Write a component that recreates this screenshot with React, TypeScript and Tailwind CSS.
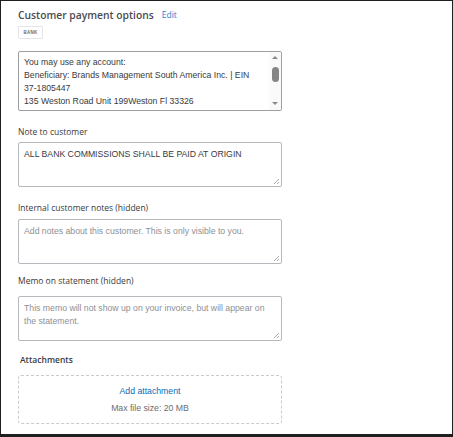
import React from "react";

const label = "text-[8.5px] leading-[11px] text-[#393a3d] font-['Open_Sans',sans-serif]";
const body = "font-['Liberation_Sans',Arial,sans-serif] text-[8.7px] leading-[13px]";

function ResizeGrip() {
  return (
    <svg
      className="absolute right-[1px] bottom-[1px]"
      width="7"
      height="7"
      viewBox="0 0 7 7"
    >
      <path d="M6 1 L1 6 M6 4 L4 6" stroke="#9a9a9a" strokeWidth="0.8" />
    </svg>
  );
}

function NoteBox({ text, placeholder }: { text: string; placeholder?: boolean }) {
  return (
    <div className="relative w-[264px] h-[45px] rounded-[2px] border border-[#b5b8bd] bg-white px-[5px] pt-[5px]">
      <p className={`${body} ${placeholder ? "text-[#8d9096]" : "text-[#393a3d]"}`}>{text}</p>
      <ResizeGrip />
    </div>
  );
}

export default function App() {
  return (
    <div className="w-[453px] h-[437px] bg-white border-t border-l border-r border-[#1f1f1f] border-b-[3px] overflow-hidden">
      <div className="pl-[17px] pt-[7px]">
        <div className="flex items-center gap-[8px] h-[14px]">
          <h2 className="text-[10.3px] leading-[14px] font-semibold text-[#4a4b4f] font-['Open_Sans',sans-serif]">
            Customer payment options
          </h2>
          <button className="text-[8.5px] leading-[14px] text-[#1a82d0] font-['Open_Sans',sans-serif]">
            Edit
          </button>
        </div>

        <div className="mt-[4px] flex">
          <span className="flex items-center justify-center w-[25px] h-[13px] border border-[#e3e5e8] rounded-[1px] text-[4.5px] leading-[5px] font-bold tracking-[0.2px] text-[#6b6c72] font-['Liberation_Sans',sans-serif]">
            BANK
          </span>
        </div>

        {/* payment instructions with a scrollbar */}
        <div className="relative mt-[12px] w-[264px] h-[60px] rounded-[2px] border border-[#9b9ea3] bg-white pl-[5px] pt-[4px] pr-[16px] overflow-hidden">
          <p className={`${body} text-[#393a3d]`}>
            You may use any account:
            <br />
            Beneficiary: Brands Management South America Inc. | EIN{" "}
            <span className="whitespace-nowrap">37-1805447</span>
            <br />
            135 Weston Road Unit 199Weston Fl 33326
          </p>
          <div className="absolute top-0 right-0 bottom-0 w-[12px] flex flex-col items-center bg-[#fafafa]">
            <div className="mt-[4px] w-0 h-0 border-l-[3px] border-r-[3px] border-b-[3px] border-l-transparent border-r-transparent border-b-[#8a8a8a]" />
            <div className="mt-[8px] w-[7px] h-[15px] rounded-full bg-[#858585]" />
            <div className="mt-auto mb-[5px] w-0 h-0 border-l-[3px] border-r-[3px] border-t-[3px] border-l-transparent border-r-transparent border-t-[#8a8a8a]" />
          </div>
        </div>

        <p className={`${label} mt-[15px]`}>Note to customer</p>
        <div className="mt-[5px]">
          <NoteBox text="ALL BANK COMMISSIONS SHALL BE PAID AT ORIGIN" />
        </div>

        <p className={`${label} mt-[15px]`}>Internal customer notes (hidden)</p>
        <div className="mt-[6px]">
          <NoteBox placeholder text="Add notes about this customer. This is only visible to you." />
        </div>

        <p className={`${label} mt-[11px]`}>Memo on statement (hidden)</p>
        <div className="mt-[10px]">
          <NoteBox
            placeholder
            text="This memo will not show up on your invoice, but will appear on the statement."
          />
        </div>

        <p className={`${label} mt-[13px] ml-[2px] font-semibold`}>Attachments</p>
        <div className="mt-[10px] w-[264px] h-[49px] rounded-[3px] border border-dashed border-[#c9cbce] flex flex-col items-center justify-center gap-[7px]">
          <button className="text-[8.7px] leading-[10px] text-[#0a6bb5] font-['Liberation_Sans',sans-serif]">
            Add attachment
          </button>
          <p className="text-[8.7px] leading-[10px] text-[#6b6c72] font-['Liberation_Sans',sans-serif]">
            Max file size: 20 MB
          </p>
        </div>
      </div>
    </div>
  );
}
